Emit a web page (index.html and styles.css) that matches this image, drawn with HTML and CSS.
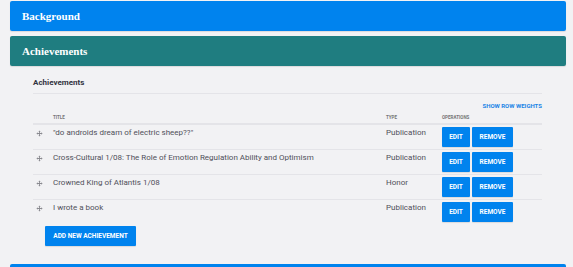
FILE: index.html
```html
<!DOCTYPE html>
<html lang="en">
<head>
    <meta charset="UTF-8">
    <meta name="viewport" content="width=device-width, initial-scale=1.0">
    <title>Achievements</title>
    <link rel="stylesheet" href="styles.css">
</head>
<body>

<div class="page">
    <div class="panel panel-blue">
        <h2>Background</h2>
    </div>

    <div class="panel panel-teal">
        <h2>Achievements</h2>
    </div>

    <div class="section">
        <h3>Achievements</h3>

        <div class="weights">
            <a href="#">Show row weights</a>
        </div>

        <table class="grid">
            <thead>
                <tr>
                    <th class="col-drag"></th>
                    <th class="col-title">Title</th>
                    <th class="col-type">Type</th>
                    <th class="col-ops">Operations</th>
                </tr>
            </thead>
            <tbody>
                <tr>
                    <td class="col-drag"><svg class="drag" viewBox="0 0 8 8"><path d="M4 0.5 L5.3 2 H4.5 V3.5 H6 V2.7 L7.5 4 L6 5.3 V4.5 H4.5 V6 H5.3 L4 7.5 L2.7 6 H3.5 V4.5 H2 V5.3 L0.5 4 L2 2.7 V3.5 H3.5 V2 H2.7 Z"/></svg></td>
                    <td>"do androids dream of electric sheep??"</td>
                    <td>Publication</td>
                    <td><button class="btn">Edit</button><button class="btn">Remove</button></td>
                </tr>
                <tr>
                    <td class="col-drag"><svg class="drag" viewBox="0 0 8 8"><path d="M4 0.5 L5.3 2 H4.5 V3.5 H6 V2.7 L7.5 4 L6 5.3 V4.5 H4.5 V6 H5.3 L4 7.5 L2.7 6 H3.5 V4.5 H2 V5.3 L0.5 4 L2 2.7 V3.5 H3.5 V2 H2.7 Z"/></svg></td>
                    <td>Cross-Cultural 1/08: The Role of Emotion Regulation Ability and Optimism</td>
                    <td>Publication</td>
                    <td><button class="btn">Edit</button><button class="btn">Remove</button></td>
                </tr>
                <tr>
                    <td class="col-drag"><svg class="drag" viewBox="0 0 8 8"><path d="M4 0.5 L5.3 2 H4.5 V3.5 H6 V2.7 L7.5 4 L6 5.3 V4.5 H4.5 V6 H5.3 L4 7.5 L2.7 6 H3.5 V4.5 H2 V5.3 L0.5 4 L2 2.7 V3.5 H3.5 V2 H2.7 Z"/></svg></td>
                    <td>Crowned King of Atlantis 1/08</td>
                    <td>Honor</td>
                    <td><button class="btn">Edit</button><button class="btn">Remove</button></td>
                </tr>
                <tr>
                    <td class="col-drag"><svg class="drag" viewBox="0 0 8 8"><path d="M4 0.5 L5.3 2 H4.5 V3.5 H6 V2.7 L7.5 4 L6 5.3 V4.5 H4.5 V6 H5.3 L4 7.5 L2.7 6 H3.5 V4.5 H2 V5.3 L0.5 4 L2 2.7 V3.5 H3.5 V2 H2.7 Z"/></svg></td>
                    <td>I wrote a book</td>
                    <td>Publication</td>
                    <td><button class="btn">Edit</button><button class="btn">Remove</button></td>
                </tr>
            </tbody>
        </table>

        <button class="btn btn-add">Add new achievement</button>
    </div>

    <!-- next section, only its top edge is in view -->
    <div class="panel panel-blue"></div>
</div>

</body>
</html>
```

FILE: styles.css
```css
body {
    margin: 0;
    padding: 0;
    background-color: #f2f2f4;
    font-family: Roboto, "Liberation Sans", Arial, sans-serif;
    overflow: hidden;
}

.page {
    display: flex;
    flex-direction: column;
    gap: 5px;
    padding: 1px 7px 0 10px;
}

.panel {
    height: 30px;
    flex-shrink: 0;
    border-radius: 2px;
    display: flex;
    align-items: center;
    padding-left: 12px;
    box-shadow: 0px 1px 1px rgba(0, 0, 0, 0.1);
}

.panel h2 {
    margin: 0;
    color: white;
    font-family: "Liberation Serif", "Times New Roman", serif;
    font-size: 11px;
    font-weight: bold;
}

.panel-blue {
    background-color: #0083ee;
}

.panel-teal {
    background-color: #1f7d80;
}

.section {
    padding: 7px 24px 13px 23px;
    display: flex;
    flex-direction: column;
}

.section h3 {
    margin: 0;
    padding-bottom: 6px;
    border-bottom: 1px solid #e4e4e8;
    font-size: 8px;
    font-weight: bold;
    color: #333340;
}

.weights {
    text-align: right;
    padding: 5px 0 4px;
    line-height: 8px;
}

.weights a {
    color: #1a84e6;
    font-size: 6px;
    font-weight: bold;
    text-decoration: none;
    text-transform: uppercase;
}

.grid {
    width: 100%;
    border-collapse: collapse;
}

.grid th {
    text-align: left;
    font-size: 4.5px;
    font-weight: bold;
    color: #777;
    text-transform: uppercase;
    padding: 0 0 2px;
    height: 7px;
    border-bottom: 2px solid #e4e4e8;
}

.grid td {
    vertical-align: top;
    font-size: 8px;
    color: #50505a;
    padding: 2px 0;
    line-height: 11px;
    border-top: 1px solid #e4e4e8;
}

.grid tbody tr:first-child td {
    border-top: none;
}

.col-drag {
    width: 20px;
}

.col-type {
    width: 56px;
}

.col-ops {
    width: 100px;
}

.drag {
    display: block;
    width: 7px;
    height: 7px;
    margin: 3px 0 0 3px;
    fill: #8a8a90;
}

.btn {
    background-color: #0083ee;
    color: white;
    border: none;
    border-radius: 1px;
    height: 20px;
    padding: 0;
    margin-right: 2px;
    font-family: Roboto, "Liberation Sans", Arial, sans-serif;
    font-size: 6.5px;
    font-weight: bold;
    text-transform: uppercase;
    white-space: nowrap;
    cursor: pointer;
    box-shadow: 0px 1px 1px rgba(0, 0, 0, 0.1);
}

.btn:first-child {
    width: 28px;
}

.btn + .btn {
    width: 41px;
}

.btn.btn-add {
    align-self: flex-start;
    margin: 2px 0 0 12px;
    width: 91px;
}
```
